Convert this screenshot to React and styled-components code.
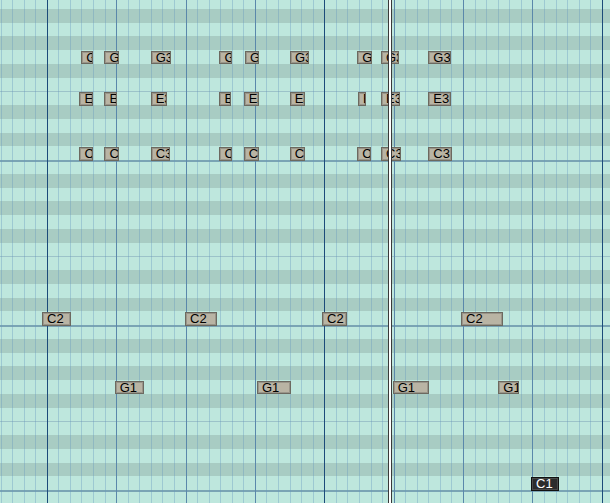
import React from 'react';
import styled, { createGlobalStyle } from 'styled-components';

const ROW_H = 13.75;
const ROW_OFFSET = -5;
const COL_W = 11.575;
const COLS = 54;
const ROWS = 37;

const Global = createGlobalStyle`
  html, body { margin: 0; padding: 0; width: 610px; height: 503px; overflow: hidden; background: #bee7dd; }
  #root { width: 610px; height: 503px; }
`;

const Roll = styled.div`
  position: relative;
  width: 610px;
  height: 503px;
  overflow: hidden;
  font-family: "Liberation Sans", Arial, sans-serif;
`;

const Rows = styled.div`
  display: flex;
  flex-direction: column;
  margin-top: ${ROW_OFFSET}px;
`;

const Row = styled.div`
  flex: 0 0 ${ROW_H}px;
  box-sizing: border-box;
  background: ${(p) => (p.$black ? '#a8ccc3' : '#bee7dd')};
  border-top: ${(p) =>
    p.$octave ? '2px solid #7aa4b4' : p.$split ? '1px solid #9cc3c9' : 'none'};
`;

const Grid = styled.div`
  position: absolute;
  inset: 0;
  display: flex;
  padding-left: 0.5px;
  pointer-events: none;
`;

const Col = styled.div`
  flex: 0 0 ${COL_W}px;
  box-sizing: border-box;
  border-left: 1px solid
    ${(p) =>
      p.$kind === 'bar'
        ? '#1c4b7a'
        : p.$kind === 'beat'
        ? '#5a88ab'
        : 'rgba(100, 150, 190, 0.36)'};
`;

const Note = styled.div`
  position: absolute;
  box-sizing: border-box;
  height: 13.5px;
  padding-left: 4px;
  border: 1px solid ${(p) => (p.$selected ? '#111' : '#6c6960')};
  box-shadow: inset 0 0 0 1px ${(p) => (p.$selected ? '#4a4a4a' : '#9a9589')};
  background: ${(p) => (p.$selected ? '#2c2c2c' : '#b9b4a4')};
  color: ${(p) => (p.$selected ? '#fff' : '#000')};
  font-size: 13px;
  line-height: 11.5px;
  white-space: nowrap;
  overflow: hidden;
`;

const Playhead = styled.div`
  position: absolute;
  top: 0;
  bottom: 0;
  left: 388px;
  width: 4px;
  box-sizing: border-box;
  border-left: 1px solid #3a3a3a;
  border-right: 1px solid #3a3a3a;
  background: #fff;
`;

const BLACK = new Set([1, 3, 5, 8, 10]);

const notes = [
  // group 1
  { row: 4, label: 'G3', x: 81.2, w: 11.6 },
  { row: 4, label: 'G3', x: 104.4, w: 15 },
  { row: 4, label: 'G3', x: 150.7, w: 20 },
  { row: 7, label: 'E3', x: 79.4, w: 14 },
  { row: 7, label: 'E3', x: 104.4, w: 13 },
  { row: 7, label: 'E3', x: 150.7, w: 16.6 },
  { row: 11, label: 'C3', x: 79.4, w: 14 },
  { row: 11, label: 'C3', x: 104.4, w: 15 },
  { row: 11, label: 'C3', x: 150.7, w: 19.5 },
  // group 2
  { row: 4, label: 'G3', x: 219.4, w: 13 },
  { row: 4, label: 'G3', x: 245, w: 14 },
  { row: 4, label: 'G3', x: 290, w: 18.7 },
  { row: 7, label: 'E3', x: 219.4, w: 11.6 },
  { row: 7, label: 'E3', x: 243.7, w: 15.4 },
  { row: 7, label: 'E3', x: 289.7, w: 15.6 },
  { row: 11, label: 'C3', x: 219.4, w: 13 },
  { row: 11, label: 'C3', x: 243.7, w: 15.6 },
  { row: 11, label: 'C3', x: 289.7, w: 15.6 },
  // group 3
  { row: 4, label: 'G3', x: 357.3, w: 15 },
  { row: 4, label: 'G3', x: 381, w: 17.7 },
  { row: 4, label: 'G3', x: 428.3, w: 22.4 },
  { row: 7, label: 'E3', x: 358, w: 7.7 },
  { row: 7, label: 'E3', x: 381, w: 19 },
  { row: 7, label: 'E3', x: 428.3, w: 22.4 },
  { row: 11, label: 'C3', x: 357.3, w: 13.4 },
  { row: 11, label: 'C3', x: 381, w: 19.7 },
  { row: 11, label: 'C3', x: 428.3, w: 24 },
  // bass
  { row: 23, label: 'C2', x: 42, w: 29 },
  { row: 23, label: 'C2', x: 185, w: 32 },
  { row: 23, label: 'C2', x: 322, w: 25 },
  { row: 23, label: 'C2', x: 461, w: 42 },
  { row: 28, label: 'G1', x: 114.7, w: 29 },
  { row: 28, label: 'G1', x: 257, w: 34 },
  { row: 28, label: 'G1', x: 392.7, w: 36.3 },
  { row: 28, label: 'G1', x: 498.3, w: 20.4 },
  { row: 35, label: 'C1', x: 531, w: 28, selected: true },
];

const colKind = (k) => {
  if ((k - 4) % 24 === 0) return 'bar';
  if ((k - 4) % 6 === 0) return 'beat';
  return 'sub';
};

export default function App() {
  return (
    <>
      <Global />
      <Roll>
        <Rows>
          {Array.from({ length: ROWS }, (_, i) => {
            const m = i % 12;
            return (
              <Row
                key={i}
                $black={BLACK.has(m)}
                $octave={m === 0 && i > 0}
                $split={m === 7}
              />
            );
          })}
        </Rows>
        <Grid>
          {Array.from({ length: COLS }, (_, k) => (
            <Col key={k} $kind={colKind(k)} />
          ))}
        </Grid>
        {notes.map((n, i) => (
          <Note
            key={i}
            $selected={n.selected}
            style={{
              left: n.x,
              top: ROW_OFFSET + n.row * ROW_H + 0.75,
              width: n.w,
            }}
          >
            {n.label}
          </Note>
        ))}
        <Playhead />
      </Roll>
    </>
  );
}
